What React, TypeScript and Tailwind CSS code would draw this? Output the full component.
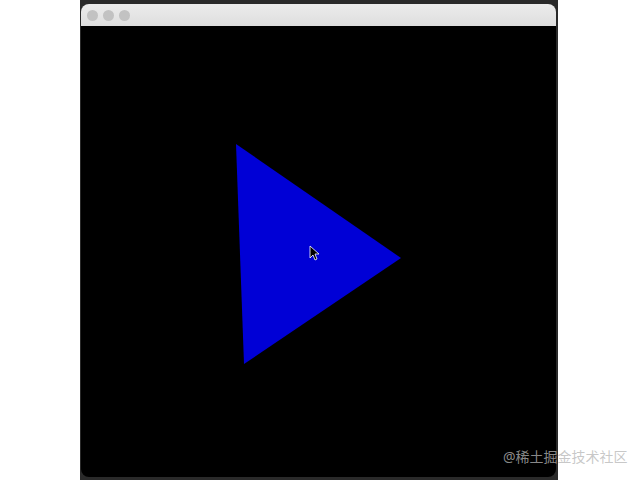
export default function App() {
  return (
    <div className="relative w-[640px] h-[480px] bg-white flex overflow-hidden">
      {/* screen recording frame */}
      <div className="ml-[80px] w-[478px] h-full bg-[#2a2a2a] pt-[4px] pl-[1px] pr-[2px] pb-[3px]">
        <div className="flex flex-col h-full rounded-[8px] overflow-hidden">
          <div className="h-[22px] shrink-0 bg-gradient-to-b from-[#ececec] to-[#dedede] flex items-center gap-[5px] pl-[6px]">
            <span className="w-[11px] h-[11px] rounded-full bg-[#c2c2c2]" />
            <span className="w-[11px] h-[11px] rounded-full bg-[#c2c2c2]" />
            <span className="w-[11px] h-[11px] rounded-full bg-[#c2c2c2]" />
          </div>
          <div className="relative flex-1 bg-black">
            <svg className="absolute inset-0" width="475" height="452" viewBox="0 0 475 452">
              {/* triangle, offset by window origin (81, 26) */}
              <polygon points="155,118 320,232 163,338" fill="#0000d6" />
              <path
                d="M229 220 L229 232 L232 229 L234 234 L236 233 L234 228 L238 228 Z"
                fill="#000"
                stroke="#fff"
                strokeWidth="0.8"
              />
            </svg>
          </div>
        </div>
      </div>
      <span
        className="absolute left-[503px] top-[448px] text-[14px] leading-[18px] text-[rgba(182,182,182,0.76)]"
        style={{ fontFamily: '"Noto Sans", "Noto Sans CJK SC", sans-serif' }}
      >
        @稀土掘金技术社区
      </span>
    </div>
  );
}
